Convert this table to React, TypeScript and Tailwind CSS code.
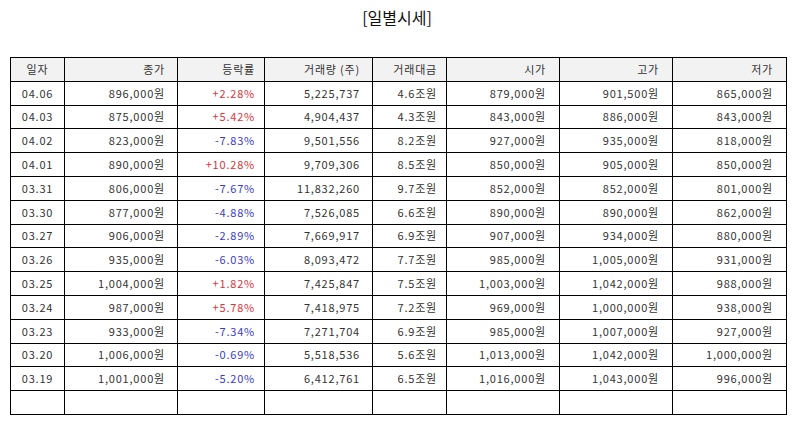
import React from "react";

const rows: [string, string, string, string, string, string, string, string][] = [
  ["04.06", "896,000원", "+2.28%", "5,225,737", "4.6조원", "879,000원", "901,500원", "865,000원"],
  ["04.03", "875,000원", "+5.42%", "4,904,437", "4.3조원", "843,000원", "886,000원", "843,000원"],
  ["04.02", "823,000원", "-7.83%", "9,501,556", "8.2조원", "927,000원", "935,000원", "818,000원"],
  ["04.01", "890,000원", "+10.28%", "9,709,306", "8.5조원", "850,000원", "905,000원", "850,000원"],
  ["03.31", "806,000원", "-7.67%", "11,832,260", "9.7조원", "852,000원", "852,000원", "801,000원"],
  ["03.30", "877,000원", "-4.88%", "7,526,085", "6.6조원", "890,000원", "890,000원", "862,000원"],
  ["03.27", "906,000원", "-2.89%", "7,669,917", "6.9조원", "907,000원", "934,000원", "880,000원"],
  ["03.26", "935,000원", "-6.03%", "8,093,472", "7.7조원", "985,000원", "1,005,000원", "931,000원"],
  ["03.25", "1,004,000원", "+1.82%", "7,425,847", "7.5조원", "1,003,000원", "1,042,000원", "988,000원"],
  ["03.24", "987,000원", "+5.78%", "7,418,975", "7.2조원", "969,000원", "1,000,000원", "938,000원"],
  ["03.23", "933,000원", "-7.34%", "7,271,704", "6.9조원", "985,000원", "1,007,000원", "927,000원"],
  ["03.20", "1,006,000원", "-0.69%", "5,518,536", "5.6조원", "1,013,000원", "1,042,000원", "1,000,000원"],
  ["03.19", "1,001,000원", "-5.20%", "6,412,761", "6.5조원", "1,016,000원", "1,043,000원", "996,000원"],
];

const headers = ["일자", "종가", "등락률", "거래량 (주)", "거래대금", "시가", "고가", "저가"];
const widths = ["w-[54px]", "w-[113px]", "w-[87px]", "w-[108px]", "w-[74px]", "w-[113px]", "w-[113px]", "w-[114px]"];
const align = [
  "text-center px-[6px]",
  "text-right pr-[12px]",
  "text-right pr-[9px]",
  "text-right pr-[12px]",
  "text-right pr-[9px]",
  "text-right pr-[13px]",
  "text-right pr-[13px]",
  "text-right pr-[13px]",
];

const cell = "border border-black h-[23.8px] py-0 leading-none tracking-[0.8px]";

export default function App() {
  return (
    <div className="w-[794px] h-[425px] bg-white text-[#333] font-['Noto_Sans_CJK_KR','Noto_Sans',sans-serif]">
      <h1 className="text-center text-[16px] leading-none pt-[9px] h-[57px] text-[#111]">[일별시세]</h1>
      <table className="ml-[10px] border-collapse table-fixed w-[776px] text-[11px]">
        <thead>
          <tr className="bg-[#f2f2f2]">
            {headers.map((h, i) => (
              <th key={h} className={`${cell} ${widths[i]} ${align[i]} font-normal`}>
                {h}
              </th>
            ))}
          </tr>
        </thead>
        <tbody>
          {rows.map((r) => (
            <tr key={r[0]}>
              {r.map((v, i) => (
                <td
                  key={i}
                  className={`${cell} ${align[i]} ${
                    i === 2 ? (v.startsWith("+") ? "text-[#e0323c]" : "text-[#3a3ad0]") : ""
                  }`}
                >
                  {v}
                </td>
              ))}
            </tr>
          ))}
          <tr>
            {headers.map((h, i) => (
              <td key={h} className={`${cell} ${align[i]}`}></td>
            ))}
          </tr>
        </tbody>
      </table>
    </div>
  );
}
